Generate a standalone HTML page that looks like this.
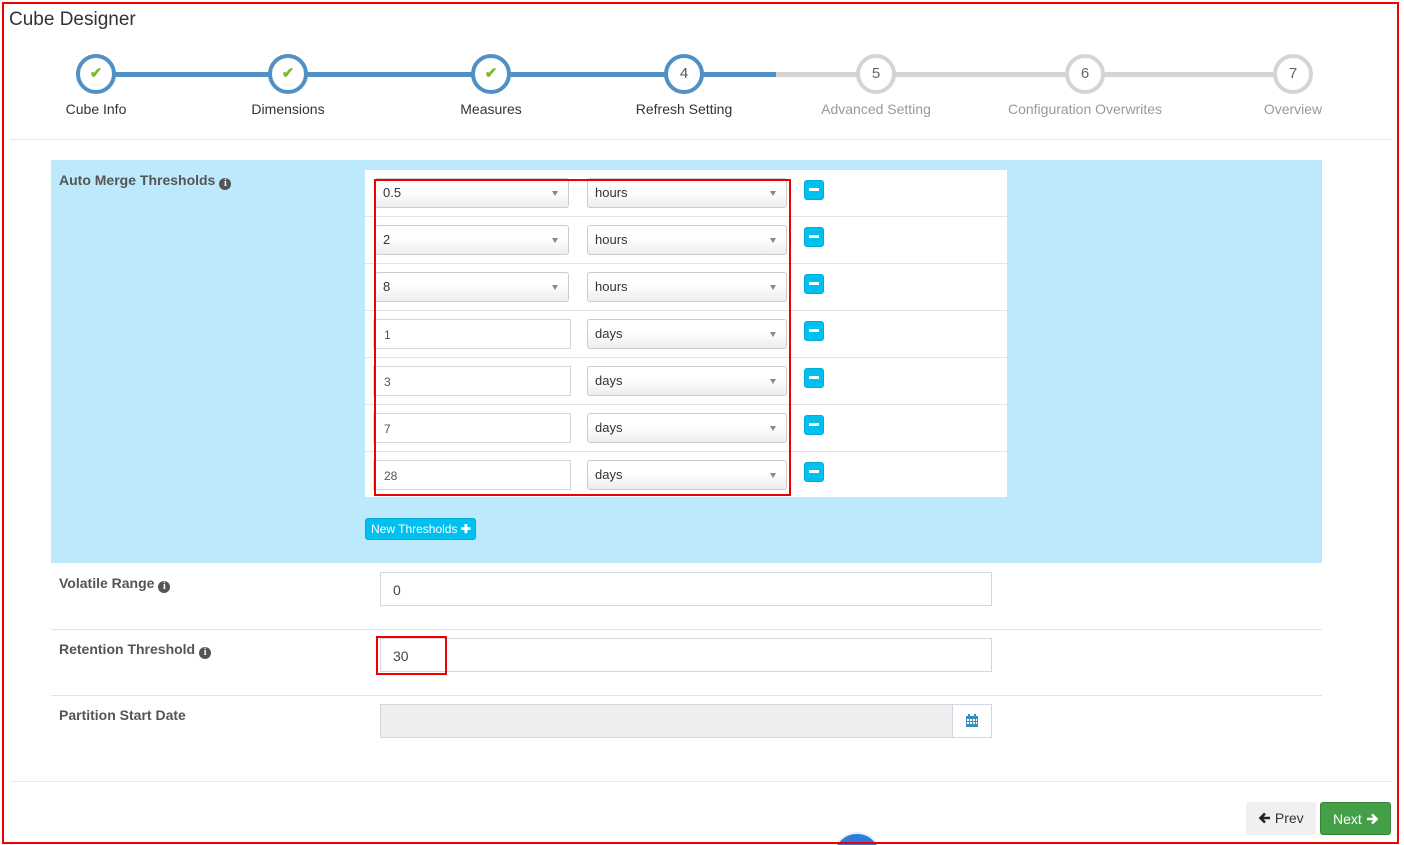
<!DOCTYPE html>
<html><head><meta charset="utf-8"><style>
*{box-sizing:border-box;margin:0;padding:0}
html,body{width:1404px;height:845px;overflow:hidden}
body{position:relative;background:#fff;font-family:"Liberation Sans",sans-serif;color:#333}
.a{position:absolute}
.frame{left:2px;top:2px;width:1397px;height:842px;border:2px solid #e00;}
.title{left:9px;top:9px;font-size:19px;color:#333}
.c{position:absolute;width:40px;height:40px;border-radius:50%;border:4px solid #5190c4;background:#fff;top:54px;font-size:15px;text-align:center;line-height:32px;color:#555}
.c.g{border-color:#d2d4d8;color:#666}
.lbl{position:absolute;top:101px;font-size:14px;transform:translateX(-50%);white-space:nowrap;color:#333}
.lbl.g{color:#999}
.hr{height:1px;background:#e8e8e8}
.sel{position:absolute;height:30px;border:1px solid #ccc;border-radius:3px;background:linear-gradient(#fff 0%,#fff 40%,#eee 100%);font-size:13px;padding:6px 0 0 7px;color:#333}
.sel:after{content:"";position:absolute;right:10px;top:12px;border-left:3.5px solid transparent;border-right:3.5px solid transparent;border-top:5px solid #888}
.inp{position:absolute;height:30px;border:1px solid #d2d6de;background:#fff;font-size:12px;padding:8px 0 0 10px;color:#555}
.min{position:absolute;left:804px;width:20px;height:20px;background:#00c0ef;border-radius:3px;border:1px solid #00acd6}
.min:after{content:"";position:absolute;left:4px;top:7px;width:10px;height:3px;background:#fff}
.rs{position:absolute;left:365px;width:642px;height:1px;background:#e4e4e4}
.fl{position:absolute;left:59px;font-size:14px;font-weight:bold;color:#555}
.i{display:inline-block;width:12px;height:12px;border-radius:50%;background:#555;color:#fff;font-size:10px;line-height:12px;text-align:center;font-family:"Liberation Serif",serif;font-weight:bold;vertical-align:-1px;margin-left:4px}
.big{position:absolute;left:380px;width:612px;height:34px;border:1px solid #d2d6de;background:#fff;font-size:14px;padding:9px 0 0 12px;color:#444}
</style></head><body>
<div class="a title">Cube Designer</div>
<div class="a" style="left:96px;top:72px;width:680px;height:5px;background:#5190c4"></div>
<div class="a" style="left:776px;top:72px;width:517px;height:5px;background:#d2d4d8"></div>
<div class="c" style="left:76px"><span style="color:#7cb82f;font-weight:bold">✔</span></div>
<div class="c" style="left:268px"><span style="color:#7cb82f;font-weight:bold">✔</span></div>
<div class="c" style="left:471px"><span style="color:#7cb82f;font-weight:bold">✔</span></div>
<div class="c" style="left:664px">4</div>
<div class="c g" style="left:856px">5</div>
<div class="c g" style="left:1065px">6</div>
<div class="c g" style="left:1273px">7</div>
<div class="lbl" style="left:96px">Cube Info</div>
<div class="lbl" style="left:288px">Dimensions</div>
<div class="lbl" style="left:491px">Measures</div>
<div class="lbl" style="left:684px">Refresh Setting</div>
<div class="lbl g" style="left:876px">Advanced Setting</div>
<div class="lbl g" style="left:1085px">Configuration Overwrites</div>
<div class="lbl g" style="left:1293px">Overview</div>
<div class="a hr" style="left:10px;top:139px;width:1382px"></div>

<div class="a" style="left:51px;top:160px;width:1271px;height:403px;background:#bde9fc"></div>
<div class="fl" style="top:172px">Auto Merge Thresholds<span class="i">i</span></div>
<div class="a" style="left:365px;top:170px;width:642px;height:327px;background:#fff"></div>
<div class="rs" style="top:216px"></div><div class="rs" style="top:263px"></div><div class="rs" style="top:310px"></div><div class="rs" style="top:357px"></div><div class="rs" style="top:404px"></div><div class="rs" style="top:451px"></div>

<div class="sel" style="left:375px;top:178px;width:194px">0.5</div><div class="sel" style="left:587px;top:178px;width:200px">hours</div><div class="min" style="top:180px"></div>
<div class="sel" style="left:375px;top:225px;width:194px">2</div><div class="sel" style="left:587px;top:225px;width:200px">hours</div><div class="min" style="top:227px"></div>
<div class="sel" style="left:375px;top:272px;width:194px">8</div><div class="sel" style="left:587px;top:272px;width:200px">hours</div><div class="min" style="top:274px"></div>
<div class="inp" style="left:373px;top:319px;width:198px">1</div><div class="sel" style="left:587px;top:319px;width:200px">days</div><div class="min" style="top:321px"></div>
<div class="inp" style="left:373px;top:366px;width:198px">3</div><div class="sel" style="left:587px;top:366px;width:200px">days</div><div class="min" style="top:368px"></div>
<div class="inp" style="left:373px;top:413px;width:198px">7</div><div class="sel" style="left:587px;top:413px;width:200px">days</div><div class="min" style="top:415px"></div>
<div class="inp" style="left:373px;top:460px;width:198px">28</div><div class="sel" style="left:587px;top:460px;width:200px">days</div><div class="min" style="top:462px"></div>
<div class="a" style="left:374px;top:179px;width:417px;height:317px;border:2px solid #e00"></div>

<div class="a" style="left:365px;top:518px;width:111px;height:22px;background:#00c0ef;border:1px solid #00acd6;border-radius:3px;color:#fff;font-size:12px;padding:3px 0 0 5px;white-space:nowrap">New Thresholds <b>✚</b></div>

<div class="fl" style="top:575px">Volatile Range<span class="i">i</span></div>
<div class="big" style="top:572px">0</div>
<div class="a hr" style="left:51px;top:629px;width:1271px;background:#e4e4e4"></div>
<div class="fl" style="top:641px">Retention Threshold<span class="i">i</span></div>
<div class="big" style="top:638px">30</div>
<div class="a" style="left:376px;top:636px;width:71px;height:39px;border:2px solid #e00"></div>
<div class="a hr" style="left:51px;top:695px;width:1271px;background:#e4e4e4"></div>
<div class="fl" style="top:707px">Partition Start Date</div>
<div class="big" style="top:704px;background:#eee"></div>
<div class="a" style="left:952px;top:704px;width:40px;height:34px;border:1px solid #d2d6de;background:#fff">
<svg width="14" height="14" style="position:absolute;left:12px;top:9px" viewBox="0 0 14 14"><rect x="1" y="2" width="12" height="11" fill="#3c8dbc"/><rect x="3" y="0" width="2" height="3" fill="#3c8dbc"/><rect x="9" y="0" width="2" height="3" fill="#3c8dbc"/><g fill="#fff"><rect x="2" y="5" width="2" height="2"/><rect x="5" y="5" width="2" height="2"/><rect x="8" y="5" width="2" height="2"/><rect x="11" y="5" width="1" height="2"/><rect x="2" y="8" width="2" height="2"/><rect x="5" y="8" width="2" height="2"/><rect x="8" y="8" width="2" height="2"/><rect x="11" y="8" width="1" height="2"/></g></svg></div>
<div class="a hr" style="left:10px;top:781px;width:1382px;background:#eaeaea"></div>

<div class="a" style="left:1246px;top:802px;width:70px;height:33px;background:#f0f0f0;border-radius:3px;font-size:14px;color:#333;white-space:nowrap;padding:8px 0 0 13px"><svg width="12" height="12" viewBox="0 0 12 12" style="vertical-align:-1px"><path d="M6 1.5 L1.5 6 L6 10.5 M1.5 6 H11" stroke="#222" stroke-width="2.6" fill="none"/></svg> Prev</div>
<div class="a" style="left:1320px;top:802px;width:71px;height:33px;background:#43a047;border:1px solid #398439;border-radius:3px;font-size:14px;color:#fff;white-space:nowrap;padding:8px 0 0 12px">Next <svg width="12" height="12" viewBox="0 0 12 12" style="vertical-align:-1px"><path d="M6 1.5 L10.5 6 L6 10.5 M10.5 6 H1" stroke="#fff" stroke-width="2.6" fill="none"/></svg></div>
<div class="a" style="left:832px;top:832px;width:50px;height:50px;border-radius:50%;background:#2d7de0;border:2px solid #e6eef8"></div>
<div class="a frame"></div>
</body></html>
